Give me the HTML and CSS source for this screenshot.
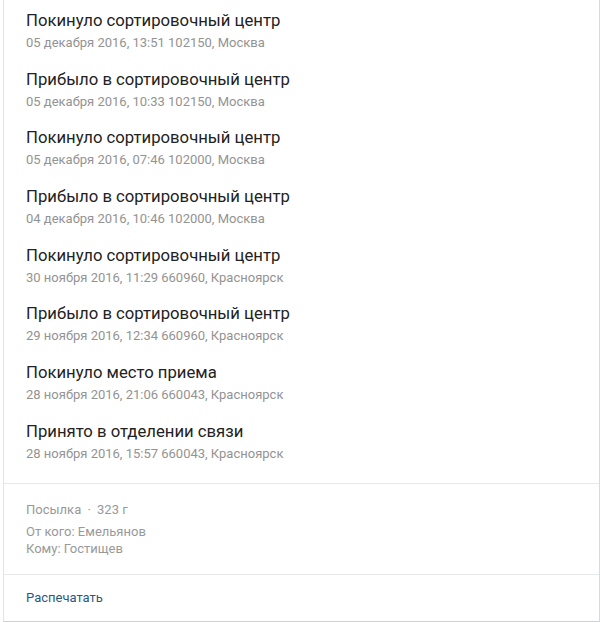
FILE: index.html
```html
<!DOCTYPE html>
<html lang="ru">
<head>
<meta charset="utf-8">
<link rel="stylesheet" href="styles.css">
</head>
<body>
<div class="card">
  <ul class="events">
    <li class="event"><div class="title">Покинуло сортировочный центр</div><div class="sub">05 декабря 2016, 13:51 102150, Москва</div></li>
    <li class="event"><div class="title">Прибыло в сортировочный центр</div><div class="sub">05 декабря 2016, 10:33 102150, Москва</div></li>
    <li class="event"><div class="title">Покинуло сортировочный центр</div><div class="sub">05 декабря 2016, 07:46 102000, Москва</div></li>
    <li class="event"><div class="title">Прибыло в сортировочный центр</div><div class="sub">04 декабря 2016, 10:46 102000, Москва</div></li>
    <li class="event"><div class="title">Покинуло сортировочный центр</div><div class="sub">30 ноября 2016, 11:29 660960, Красноярск</div></li>
    <li class="event"><div class="title">Прибыло в сортировочный центр</div><div class="sub">29 ноября 2016, 12:34 660960, Красноярск</div></li>
    <li class="event"><div class="title">Покинуло место приема</div><div class="sub">28 ноября 2016, 21:06 660043, Красноярск</div></li>
    <li class="event"><div class="title">Принято в отделении связи</div><div class="sub">28 ноября 2016, 15:57 660043, Красноярск</div></li>
  </ul>
  <div class="info">
    <div class="kind">Посылка <span class="dot">·</span> 323 г</div>
    <div class="people">
      <div>От кого: Емельянов</div>
      <div>Кому: Гостищев</div>
    </div>
  </div>
  <div class="actions">
    <a class="print" href="#">Распечатать</a>
  </div>
</div>
</body>
</html>
```

FILE: styles.css
```css
html, body {
  margin: 0;
  padding: 0;
  background: #fff;
}
body {
  font-family: Roboto, "Noto Sans", sans-serif;
  width: 600px;
  height: 622px;
  overflow: hidden;
}
.card {
  margin-left: 3px;
  width: 595px;
  height: 621px;
  border-left: 1px solid #e2e3e5;
  border-right: 1px solid #d8d9db;
  border-bottom: 1px solid #cfd0d2;
  display: flex;
  flex-direction: column;
}
.events {
  list-style: none;
  margin: 0;
  padding: 11px 0 0 22px;
  display: flex;
  flex-direction: column;
  gap: 18.7px;
  height: 484px;
  flex-shrink: 0;
  box-sizing: border-box;
  border-bottom: 1px solid #e7e8ea;
}
.event {
  display: flex;
  flex-direction: column;
  gap: 3px;
}
.title {
  font-size: 16.7px;
  line-height: 20px;
  color: #222;
}
.sub {
  font-size: 13px;
  line-height: 17px;
  color: #939393;
}
.info {
  height: 91px;
  flex-shrink: 0;
  box-sizing: border-box;
  padding: 17px 0 0 22px;
  border-bottom: 1px solid #e7e8ea;
  font-size: 13px;
  color: #999;
}
.kind {
  line-height: 18px;
  margin-bottom: 4px;
}
.dot {
  margin: 0 3px;
}
.people div {
  line-height: 17px;
}
.actions {
  padding: 12px 0 0 22px;
}
.print {
  font-size: 13px;
  line-height: 18px;
  color: #2a5885;
  text-decoration: none;
}
```
